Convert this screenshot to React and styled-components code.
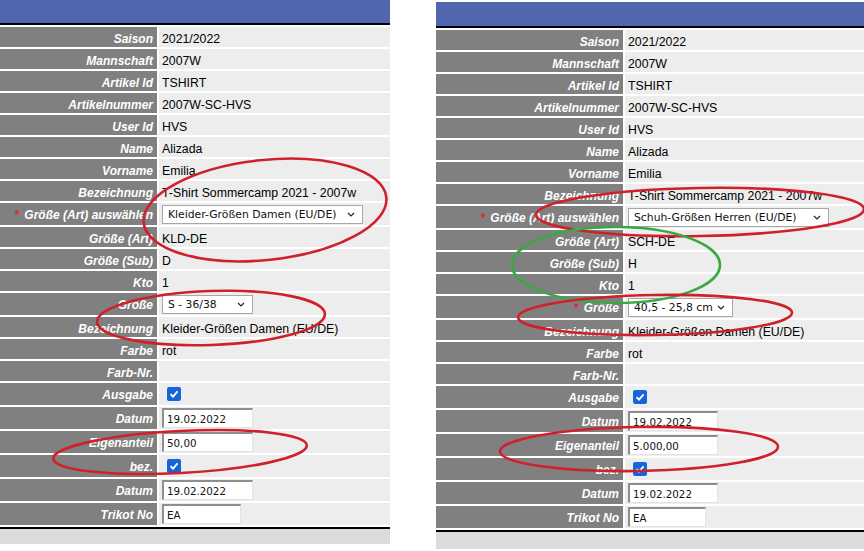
import React from 'react';
import styled, { createGlobalStyle } from 'styled-components';

const Global = createGlobalStyle`
  html, body { margin: 0; padding: 0; background: #fff; }
  body { font-family: "Liberation Sans", Arial, sans-serif; }
`;

const Page = styled.div`
  position: relative;
  width: 864px;
  height: 551px;
  display: flex;
  align-items: flex-start;
  gap: 46px;
  overflow: hidden;
`;

const Panel = styled.div`
  width: ${p => p.$w}px;
  margin-top: ${p => p.$top}px;
  display: flex;
  flex-direction: column;
`;

const Header = styled.div`
  height: ${p => p.$h}px;
  background: #5066ae;
  border-bottom: 2px solid #000;
`;

const Rows = styled.div`
  display: grid;
  row-gap: 2px;
  padding-top: 2px;
`;

const Row = styled.div`
  display: grid;
  grid-template-columns: ${p => p.$labelW}px 1fr;
  column-gap: 2px;
  height: ${p => (p.$tall ? 22 : 20)}px;
`;

const Label = styled.div`
  background: #808080;
  color: #fff;
  font-weight: bold;
  font-style: italic;
  font-size: 12px;
  display: flex;
  align-items: center;
  justify-content: flex-end;
  padding: ${p => (p.$tall ? '1px' : '3px')} 4px 0 0;
  box-sizing: border-box;
  white-space: nowrap;
`;

const Star = styled.span`
  color: #e2262b;
  margin-right: 5px;
  font-style: normal;
`;

const Value = styled.div`
  background: #ededed;
  color: #000;
  font-size: 12.3px;
  display: flex;
  align-items: center;
  padding: ${p => (p.$tall ? '0' : '3px')} 0 0 3px;
  box-sizing: border-box;
  white-space: nowrap;
`;

const SelectBox = styled.div`
  box-sizing: border-box;
  width: ${p => p.$w}px;
  height: 19px;
  background: #fff;
  border: 1px solid #a7a7a7;
  display: flex;
  align-items: center;
  justify-content: space-between;
  gap: 4px;
  padding: 0 7px 0 5px;
  font-family: "DejaVu Sans", Verdana, sans-serif;
  font-size: 10.8px;
  color: #111;
  span { overflow: hidden; }
  svg { flex: none; }
`;

const TextInput = styled.div`
  box-sizing: border-box;
  width: ${p => p.$w}px;
  height: 20px;
  background: #fff;
  border-style: solid;
  border-width: 2px 1px 1px 2px;
  border-color: #8e8e8e #e2e2e2 #e2e2e2 #8e8e8e;
  display: flex;
  align-items: center;
  padding-left: 3px;
  font-family: "DejaVu Sans", Tahoma, sans-serif;
  font-size: 10.3px;
  color: #111;
`;

const Check = styled.div`
  width: 14px;
  height: 14px;
  margin-left: 5px;
  border-radius: 2px;
  background: #1565d8;
  display: flex;
  align-items: center;
  justify-content: center;
`;

const Footer = styled.div`
  margin-top: 2px;
  height: ${p => p.$h}px;
  border-top: 2px solid #000;
  background: #dcdcdc;
`;

const Overlay = styled.svg`
  position: absolute;
  left: 0;
  top: 0;
  pointer-events: none;
`;

const Chevron = () => (
  <svg width="8" height="5" viewBox="0 0 8 5">
    <path d="M1 1 L4 4 L7 1" fill="none" stroke="#222" strokeWidth="1.2" />
  </svg>
);

const Tick = () => (
  <svg width="10" height="10" viewBox="0 0 10 10">
    <path d="M1.5 5.2 L4 7.6 L8.6 2.4" fill="none" stroke="#fff" strokeWidth="1.8" />
  </svg>
);

function Field({ row }) {
  if (row.type === 'select') return <SelectBox $w={row.w}><span>{row.value}</span><Chevron /></SelectBox>;
  if (row.type === 'input') return <TextInput $w={row.w}>{row.value}</TextInput>;
  if (row.type === 'check') return <Check><Tick /></Check>;
  return <span>{row.value}</span>;
}

function Form({ rows, width, labelW, top, headH, footH }) {
  return (
    <Panel $w={width} $top={top}>
      <Header $h={headH} />
      <Rows>
        {rows.map((r, i) => {
          const tall = !!r.type;
          return (
            <Row key={i} $labelW={labelW} $tall={tall}>
              <Label $tall={tall}>{r.req && <Star>*</Star>}{r.label}</Label>
              <Value $tall={tall}><Field row={r} /></Value>
            </Row>
          );
        })}
      </Rows>
      <Footer $h={footH} />
    </Panel>
  );
}

const makeRows = d => [
  { label: 'Saison', value: '2021/2022' },
  { label: 'Mannschaft', value: '2007W' },
  { label: 'Artikel Id', value: 'TSHIRT' },
  { label: 'Artikelnummer', value: '2007W-SC-HVS' },
  { label: 'User Id', value: 'HVS' },
  { label: 'Name', value: 'Alizada' },
  { label: 'Vorname', value: 'Emilia' },
  { label: 'Bezeichnung', value: 'T-Shirt Sommercamp 2021 - 2007w' },
  { label: 'Größe (Art) auswählen', req: true, type: 'select', value: d.art, w: 201 },
  { label: 'Größe (Art)', value: d.artCode },
  { label: 'Größe (Sub)', value: d.sub },
  { label: 'Kto', value: '1' },
  { label: 'Größe', req: d.sizeReq, type: 'select', value: d.size, w: d.sizeW },
  { label: 'Bezeichnung', value: 'Kleider-Größen Damen (EU/DE)' },
  { label: 'Farbe', value: 'rot' },
  { label: 'Farb-Nr.', value: '' },
  { label: 'Ausgabe', type: 'check' },
  { label: 'Datum', type: 'input', value: '19.02.2022', w: d.inW },
  { label: 'Eigenanteil', type: 'input', value: d.anteil, w: d.inW },
  { label: 'bez.', type: 'check' },
  { label: 'Datum', type: 'input', value: '19.02.2022', w: d.inW },
  { label: 'Trikot No', type: 'input', value: 'EA', w: d.inW - 12 },
];

const leftRows = makeRows({
  art: 'Kleider-Größen Damen (EU/DE)', artCode: 'KLD-DE', sub: 'D',
  size: 'S - 36/38', sizeW: 91, sizeReq: false, anteil: '50,00', inW: 91,
});

const rightRows = makeRows({
  art: 'Schuh-Größen Herren (EU/DE)', artCode: 'SCH-DE', sub: 'H',
  size: '40,5 - 25,8 cm', sizeW: 105, sizeReq: true, anteil: '5.000,00', inW: 90,
});

// hand-drawn marks from the screenshot
const marks = [
  { cx: 265, cy: 210, rx: 122, ry: 50, a: -6, c: '#d0202c' },
  { cx: 211, cy: 318, rx: 114, ry: 27, a: -2, c: '#d0202c' },
  { cx: 180, cy: 452, rx: 127, ry: 21, a: -3, c: '#d0202c' },
  { cx: 700, cy: 212, rx: 164, ry: 24, a: -1, c: '#d0202c' },
  { cx: 616, cy: 265, rx: 104, ry: 38, a: 0, c: '#3aa845' },
  { cx: 655, cy: 315, rx: 137, ry: 20, a: -1, c: '#d0202c' },
  { cx: 639, cy: 449, rx: 139, ry: 22, a: -1, c: '#d0202c' },
];

export default function App() {
  return (
    <>
      <Global />
      <Page>
        <Form rows={leftRows} width={390} labelW={157} top={0} headH={23} footH={15} />
        <Form rows={rightRows} width={428} labelW={187} top={2} headH={24} footH={17} />
        <Overlay width="864" height="551" viewBox="0 0 864 551">
          {marks.map((m, i) => (
            <ellipse key={i} cx={m.cx} cy={m.cy} rx={m.rx} ry={m.ry}
              transform={`rotate(${m.a} ${m.cx} ${m.cy})`}
              fill="none" stroke={m.c} strokeWidth="2.6" />
          ))}
        </Overlay>
      </Page>
    </>
  );
}
